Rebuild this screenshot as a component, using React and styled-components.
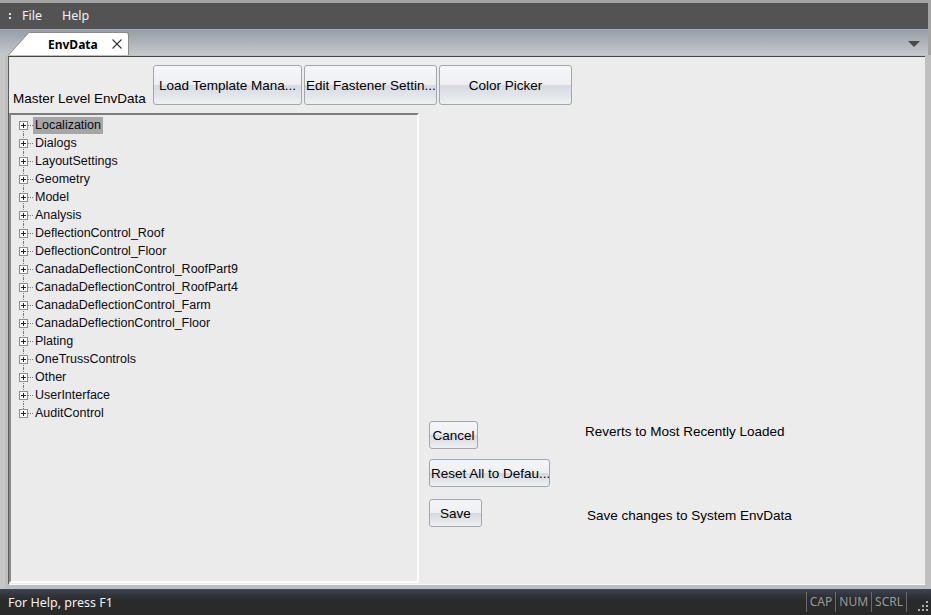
import React from "react";
import styled, { createGlobalStyle, css } from "styled-components";

const GlobalStyle = createGlobalStyle`
  html, body {
    margin: 0;
    padding: 0;
    background: #bdbdbd;
  }
  #root {
    width: 931px;
    height: 615px;
    overflow: hidden;
  }
`;

const treeItems = [
  "Localization",
  "Dialogs",
  "LayoutSettings",
  "Geometry",
  "Model",
  "Analysis",
  "DeflectionControl_Roof",
  "DeflectionControl_Floor",
  "CanadaDeflectionControl_RoofPart9",
  "CanadaDeflectionControl_RoofPart4",
  "CanadaDeflectionControl_Farm",
  "CanadaDeflectionControl_Floor",
  "Plating",
  "OneTrussControls",
  "Other",
  "UserInterface",
  "AuditControl",
];

const Window = styled.div`
  display: flex;
  flex-direction: column;
  width: 931px;
  height: 615px;
  background: #bdbdbd;
  font-family: "Liberation Sans", Arial, sans-serif;
`;

const MenuBar = styled.div`
  display: flex;
  align-items: center;
  height: 26px;
  border-top: 3px solid #a4a4a4;
  border-right: 3px solid #a4a4a4;
  background: #535353;
  font-family: "Noto Sans", "Open Sans", sans-serif;
  font-size: 12.5px;
  color: #f4f4f4;
`;

const Grip = styled.div`
  display: flex;
  flex-direction: column;
  gap: 2px;
  margin: 0 11px 0 9px;
  span {
    width: 2px;
    height: 2px;
    background: #e0e0e0;
  }
`;

const MenuItem = styled.div`
  padding: 0 ${({ $pad }) => $pad}px 0 0;
  line-height: 26px;
`;

const TabStrip = styled.div`
  position: relative;
  display: flex;
  align-items: flex-end;
  height: 26px;
  padding-left: 8px;
  border-right: 3px solid #a4a4a4;
  border-top: 1px solid #a9adb2;
  box-sizing: border-box;
  background: linear-gradient(#979ea6, #c5c9ce);
`;

const TabOuter = styled.div`
  width: 121px;
  height: 23px;
  padding: 1px 1px 0 1px;
  box-sizing: border-box;
  background: #8a8a8a;
  border-top-right-radius: 3px;
  clip-path: polygon(0 100%, 21px 0, 100% 0, 100% 100%);
`;

const TabInner = styled.div`
  display: flex;
  align-items: center;
  height: 100%;
  padding-left: 39px;
  box-sizing: border-box;
  background: #fff;
  border-top-right-radius: 2px;
  clip-path: polygon(0 100%, 20px 0, 100% 0, 100% 100%);
  font-family: "Noto Sans", "Open Sans", sans-serif;
  font-weight: bold;
  font-size: 12px;
  color: #000;
`;

const CloseX = styled.svg`
  margin-left: 14px;
`;

const DropArrow = styled.div`
  position: absolute;
  right: 8px;
  top: 11px;
  width: 0;
  height: 0;
  border-left: 6px solid transparent;
  border-right: 6px solid transparent;
  border-top: 6px solid #4a4a4a;
`;

const Body = styled.div`
  flex: 1;
  display: flex;
  padding: 1px 6px 4px 3px;
  border-left: 5px solid #c6c6c6;
  box-sizing: border-box;
  background: #bfbfbf;
`;

const Frame = styled.div`
  flex: 1;
  display: flex;
  flex-direction: column;
  background: #ececec;
  border-top: 1px solid #454545;
  border-left: 1px solid #5a5a5a;
  border-bottom: 1px solid #fafafa;
  padding: 8px 0 1px 0;
  box-sizing: border-box;
`;

const TopRow = styled.div`
  display: flex;
  align-items: flex-end;
  height: 40px;
  gap: 2px;
`;

const MasterLabel = styled.div`
  width: 138px;
  margin-left: 4px;
  font-size: 13.5px;
  line-height: 14px;
  margin-bottom: -1px;
  color: #000;
  white-space: nowrap;
`;

const buttonLook = css`
  box-sizing: border-box;
  border: 1px solid #a3a7ad;
  border-radius: 3px;
  background: linear-gradient(
    #f5f6f9 0%,
    #eef0f4 48%,
    #d7dbe1 52%,
    #e2e5ea 78%,
    #eef0f3 100%
  );
  font-family: "Liberation Sans", Arial, sans-serif;
  font-size: 13.5px;
  color: #000;
  white-space: nowrap;
  overflow: hidden;
  padding: 0 1px;
  cursor: pointer;
`;

const ToolButton = styled.button`
  ${buttonLook};
  width: ${({ $w }) => $w}px;
  height: 40px;
`;

const MainRow = styled.div`
  flex: 1;
  display: flex;
  margin-top: 8px;
`;

const Tree = styled.div`
  width: 410px;
  box-sizing: border-box;
  border-top: 2px solid #7c7c7c;
  border-left: 2px solid #8a8a8a;
  border-right: 2px solid #fdfdfd;
  border-bottom: 2px solid #fdfdfd;
  background: #ebebeb;
  padding-top: 1px;
`;

const TreeRow = styled.div`
  position: relative;
  display: flex;
  align-items: center;
  height: 18px;
  padding-left: 8px;
  font-size: 12.5px;
  color: #0a0a14;

  &::before {
    content: "";
    position: absolute;
    left: 12px;
    top: ${({ $first }) => ($first ? "9px" : "0")};
    bottom: ${({ $last }) => ($last ? "9px" : "0")};
    border-left: 1px dotted #7a7a7a;
  }
`;

const Expander = styled.div`
  position: relative;
  z-index: 1;
  width: 9px;
  height: 9px;
  box-sizing: border-box;
  border: 1px solid #8e8e8e;
  background: #fbfbfb;

  &::before {
    content: "";
    position: absolute;
    left: 1px;
    top: 3px;
    width: 5px;
    height: 1px;
    background: #222;
  }
  &::after {
    content: "";
    position: absolute;
    left: 3px;
    top: 1px;
    width: 1px;
    height: 5px;
    background: #222;
  }
`;

const Connector = styled.div`
  width: 5px;
  border-top: 1px dotted #7a7a7a;
`;

const ItemLabel = styled.span`
  padding: 0 2px;
  line-height: 17px;
  background: ${({ $selected }) => ($selected ? "#a6a6a6" : "transparent")};
  white-space: nowrap;
`;

const ActionPanel = styled.div`
  flex: 1;
  display: flex;
  flex-direction: column;
  justify-content: flex-end;
  padding: 0 0 56px 10px;
`;

const ActionRow = styled.div`
  display: grid;
  grid-template-columns: 156px auto;
  align-items: center;
  height: 28px;
  margin-top: ${({ $mt }) => $mt}px;
`;

const ActionButton = styled.button`
  ${buttonLook};
  width: ${({ $w }) => $w}px;
  height: 28px;
`;

const Note = styled.div`
  font-size: 13.5px;
  color: #000;
  margin-left: ${({ $dx }) => $dx}px;
  transform: translateY(${({ $dy }) => $dy}px);
  white-space: nowrap;
`;

const StatusBar = styled.div`
  display: flex;
  align-items: center;
  height: 26px;
  background: linear-gradient(#41454f 0px, #30323a 7px, #2a2a2a 12px, #2a2a2a 100%);
  font-family: "Noto Sans", "Open Sans", sans-serif;
  font-size: 12.5px;
  color: #f2f2f2;
  padding-left: 8px;
`;

const StatusText = styled.div`
  flex: 1;
`;

const Indicator = styled.div`
  border-left: 1px solid #6a6a6a;
  padding: 0 3px;
  line-height: 20px;
  color: #9a9a9a;
  font-size: 12px;
  &:last-of-type {
    border-right: 1px solid #6a6a6a;
  }
`;

const Resize = styled.svg`
  margin: 8px 2px 0 10px;
`;

export default function App() {
  return (
    <>
      <GlobalStyle />
      <Window>
        <MenuBar>
          <Grip>
            <span />
            <span />
          </Grip>
          <MenuItem $pad={20}>File</MenuItem>
          <MenuItem $pad={0}>Help</MenuItem>
        </MenuBar>

        <TabStrip>
          <TabOuter>
            <TabInner>
              EnvData
              <CloseX width="10" height="10" viewBox="0 0 10 10">
                <path d="M0.5 0.5 L9.5 9.5 M9.5 0.5 L0.5 9.5" stroke="#333" strokeWidth="1.1" fill="none" />
              </CloseX>
            </TabInner>
          </TabOuter>
          <DropArrow />
        </TabStrip>

        <Body>
          <Frame>
            <TopRow>
              <MasterLabel>Master Level EnvData</MasterLabel>
              <ToolButton $w={149}>Load Template Mana...</ToolButton>
              <ToolButton $w={133}>Edit Fastener Settin...</ToolButton>
              <ToolButton $w={133}>Color Picker</ToolButton>
            </TopRow>

            <MainRow>
              <Tree>
                {treeItems.map((name, i) => (
                  <TreeRow key={name} $first={i === 0} $last={i === treeItems.length - 1}>
                    <Expander />
                    <Connector />
                    <ItemLabel $selected={i === 0}>{name}</ItemLabel>
                  </TreeRow>
                ))}
              </Tree>

              <ActionPanel>
                <ActionRow $mt={0}>
                  <ActionButton $w={49}>Cancel</ActionButton>
                  <Note $dx={0} $dy={-4}>Reverts to Most Recently Loaded</Note>
                </ActionRow>
                <ActionRow $mt={10}>
                  <ActionButton $w={121}>Reset All to Defau...</ActionButton>
                </ActionRow>
                <ActionRow $mt={12}>
                  <ActionButton $w={53}>Save</ActionButton>
                  <Note $dx={2} $dy={2}>Save changes to System EnvData</Note>
                </ActionRow>
              </ActionPanel>
            </MainRow>
          </Frame>
        </Body>

        <StatusBar>
          <StatusText>For Help, press F1</StatusText>
          <Indicator>CAP</Indicator>
          <Indicator>NUM</Indicator>
          <Indicator>SCRL</Indicator>
          <Resize width="12" height="12" viewBox="0 0 12 12">
            {[
              [10, 2], [10, 6], [10, 10], [6, 6], [6, 10], [2, 10],
            ].map(([x, y]) => (
              <rect key={`${x}-${y}`} x={x - 1} y={y - 1} width="2" height="2" fill="#b0b0b0" />
            ))}
          </Resize>
        </StatusBar>
      </Window>
    </>
  );
}
